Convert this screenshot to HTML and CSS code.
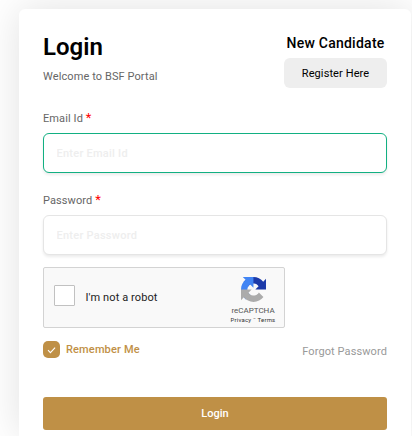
FILE: index.html
```html
<!DOCTYPE html>
<html lang="en">
<head>
  <meta charset="UTF-8">
  <meta name="viewport" content="width=device-width, initial-scale=1.0">
  <title>BSF Portal - Login</title>
  <link rel="stylesheet" href="styles.css">
</head>
<body>
  <div class="login-card">
    <div class="card-header">
      <div>
        <h1>Login</h1>
        <p class="welcome">Welcome to BSF Portal</p>
      </div>
      <div class="new-candidate">
        <h2>New Candidate</h2>
        <a class="register-btn">Register Here</a>
      </div>
    </div>

    <form>
      <label class="field-label" for="email">Email Id <span class="required">*</span></label>
      <input class="field active" id="email" type="text" placeholder="Enter Email Id">

      <label class="field-label" for="password">Password <span class="required">*</span></label>
      <input class="field" id="password" type="password" placeholder="Enter Password">

      <div class="captcha">
        <span class="captcha-box"></span>
        <span class="captcha-text">I'm not a robot</span>
        <div class="captcha-brand">
          <svg width="25" height="25" viewBox="0 0 64 64">
            <path fill="#1c3aa9" d="M64 31.955l-.033-1.37V4.687l-7.16 7.16C50.948 4.674 42.033.093 32.05.093c-10.4 0-19.622 4.96-25.458 12.64l11.736 11.86a15.55 15.55 0 0 1 4.754-5.334c2.05-1.6 4.952-2.906 8.968-2.906.485 0 .86.057 1.135.163 4.976.393 9.288 3.14 11.828 7.124l-8.307 8.307L64 31.953"/>
            <path fill="#4285f4" d="M31.862.094l-1.37.033H4.594l7.16 7.16C4.58 13.147 0 22.06 0 32.046c0 10.4 4.96 19.622 12.64 25.458L24.5 45.768a15.55 15.55 0 0 1-5.334-4.754c-1.6-2.05-2.906-4.952-2.906-8.968 0-.485.057-.86.163-1.135.393-4.976 3.14-9.288 7.124-11.828l8.307 8.307L31.86.095"/>
            <path fill="#ababab" d="M.001 32.045l.033 1.37v25.898l7.16-7.16c5.86 7.173 14.774 11.754 24.76 11.754 10.4 0 19.622-4.96 25.458-12.64l-11.736-11.86a15.55 15.55 0 0 1-4.754 5.334c-2.05 1.6-4.952 2.906-8.968 2.906-.485 0-.86-.057-1.135-.163-4.976-.393-9.288-3.14-11.828-7.124l8.307-8.307c-10.522.04-22.4.066-27.295-.005"/>
          </svg>
          <span class="captcha-name">reCAPTCHA</span>
          <span class="captcha-links">Privacy ˉ Terms</span>
        </div>
      </div>

      <div class="options">
        <span class="remember">
          <span class="check">
            <svg width="17" height="17" viewBox="0 0 17 17">
              <path d="M5 9.2l2.4 2.4 4.7-4.9" fill="none" stroke="#fff" stroke-width="1.1"/>
            </svg>
          </span>
          Remember Me
        </span>
        <a class="forgot">Forgot Password</a>
      </div>

      <button class="login-btn" type="button">Login</button>
    </form>
  </div>
</body>
</html>
```
FILE: styles.css
```css
* {
  box-sizing: border-box;
}
body {
  margin: 0;
  padding: 9px 1px 0 19px;
  height: 436px;
  overflow: hidden;
  background: #fff;
  font-family: Roboto, "Liberation Sans", sans-serif;
  font-size: 11px;
  color: #666;
}
h1, h2, p {
  margin: 0;
}
.login-card {
  height: 427px;
  padding: 24px 24px 0;
  background: #fff;
  border-radius: 6px 6px 0 0;
  box-shadow: 0 0 40px rgba(0, 0, 0, 0.12);
}
.card-header {
  display: flex;
  justify-content: space-between;
  height: 78px;
}
h1 {
  font-size: 24px;
  line-height: 28px;
  font-weight: 600;
  color: #000;
}
.welcome {
  margin-top: 9px;
  line-height: 14px;
  letter-spacing: 0.1px;
}
.new-candidate {
  width: 103px;
  text-align: center;
}
h2 {
  font-size: 14px;
  line-height: 20px;
  font-weight: 500;
  letter-spacing: 0.25px;
  color: #000;
}
.register-btn {
  display: block;
  margin-top: 5px;
  height: 30px;
  line-height: 31px;
  border-radius: 6px;
  background: #eee;
  color: #000;
  letter-spacing: 0.1px;
}
.field-label {
  display: block;
  height: 22px;
  line-height: 16px;
  letter-spacing: 0.1px;
}
.required {
  color: #f00;
  font-size: 13px;
  line-height: 1;
}
.field {
  display: block;
  width: 100%;
  height: 40px;
  margin-bottom: 20px;
  padding: 0 13px 0 12.5px;
  border: 1px solid #e5e5e5;
  border-radius: 6px;
  box-shadow: 0 2px 3px rgba(0, 0, 0, 0.08);
  font: 500 11px Roboto, "Liberation Sans", sans-serif;
  letter-spacing: 0.25px;
  outline: none;
}
.field.active {
  border-color: #12b082;
}
.field::placeholder {
  color: #eee;
}
.captcha {
  display: flex;
  align-items: center;
  width: 242px;
  height: 61px;
  margin-top: -8px;
  padding: 0 8px 0 10px;
  border: 1px solid #d3d3d3;
  border-radius: 2px;
  background: #f9f9f9;
}
.captcha-box {
  width: 21px;
  height: 21px;
  margin-top: -4px;
  border: 1px solid #c1c1c1;
  border-radius: 1px;
  background: #fff;
}
.captcha-text {
  margin-left: 10.5px;
  color: #222;
  letter-spacing: 0.1px;
}
.captcha-brand {
  display: flex;
  flex-direction: column;
  align-items: center;
  width: 46px;
  margin-left: auto;
  padding-top: 6px;
  color: #555;
  white-space: nowrap;
}
.captcha-name {
  margin-top: 3px;
  font-size: 8px;
  line-height: 11px;
}
.captcha-links {
  font-size: 6px;
  line-height: 8px;
  letter-spacing: 0.2px;
  color: #333;
}
.options {
  display: flex;
  justify-content: space-between;
  align-items: center;
  height: 17px;
  margin-top: 13px;
}
.remember {
  display: flex;
  align-items: center;
  gap: 6px;
  font-weight: 500;
  letter-spacing: 0.15px;
  color: #bf9046;
}
.check {
  width: 17px;
  height: 17px;
  border-radius: 5px;
  background: #bf9046;
}
.check svg {
  display: block;
}
.forgot {
  margin-top: 4px;
  color: #999;
  letter-spacing: 0.1px;
}
.login-btn {
  display: block;
  width: 100%;
  height: 33px;
  margin-top: 39px;
  border: none;
  border-radius: 3px;
  background: #bf9046;
  color: #fff;
  font: 500 11px Roboto, "Liberation Sans", sans-serif;
}
```
